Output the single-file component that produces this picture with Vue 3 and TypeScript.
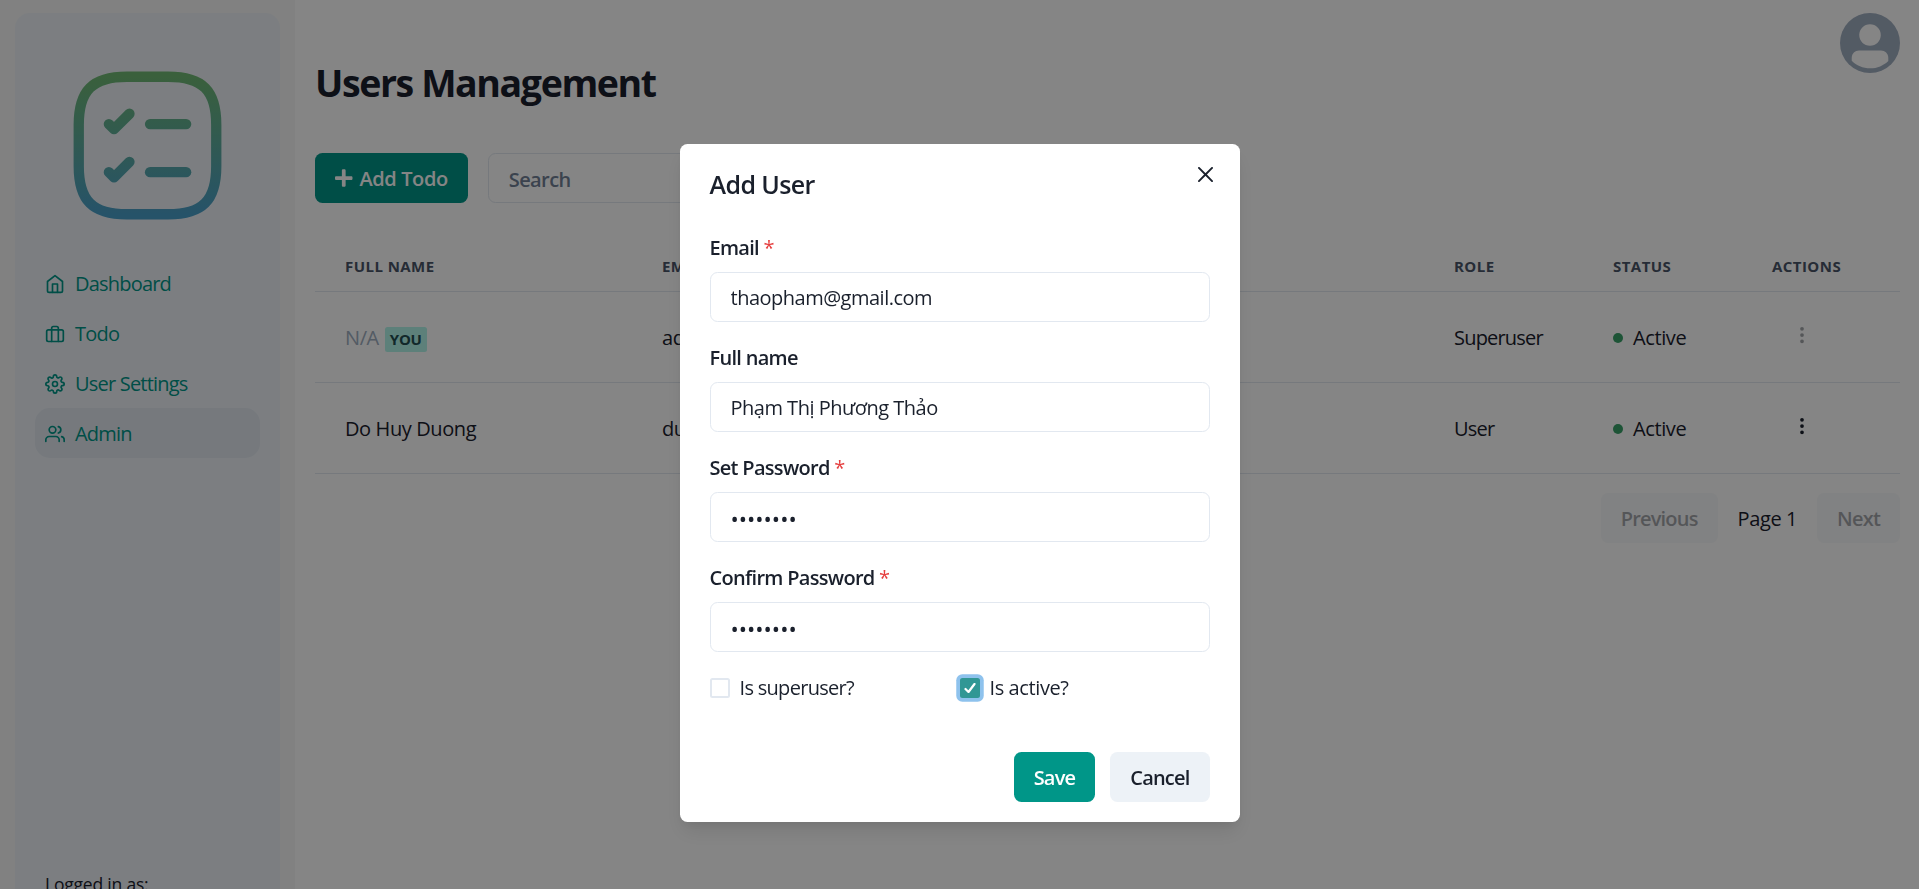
<script setup lang="ts">
type NavItem = { label: string; icon: string; active?: boolean };
type UserRow = { name: string; email: string; role: string; you?: boolean };
type Field = { label: string; type: string; value: string; required: boolean };

const navItems: NavItem[] = [
	{ label: 'Dashboard', icon: 'home' },
	{ label: 'Todo', icon: 'briefcase' },
	{ label: 'User Settings', icon: 'settings' },
	{ label: 'Admin', icon: 'users', active: true },
];

const users: UserRow[] = [
	{ name: 'N/A', email: 'admin@example.com', role: 'Superuser', you: true },
	{ name: 'Do Huy Duong', email: 'duongdo@gmail.com', role: 'User' },
];

const fields: Field[] = [
	{ label: 'Email', type: 'email', value: 'thaopham@gmail.com', required: true },
	{ label: 'Full name', type: 'text', value: 'Phạm Thị Phương Thảo', required: false },
	{ label: 'Set Password', type: 'password', value: '12345678', required: true },
	{ label: 'Confirm Password', type: 'password', value: '12345678', required: true },
];
</script>

<template>
	<div class="page">
		<aside class="sidebar">
			<div class="sidebarPanel">
				<svg class="logo" viewBox="0 0 24 24" fill="none" stroke="url(#logoGradient)" stroke-width="1.5" stroke-linecap="round" stroke-linejoin="round">
					<defs>
						<linearGradient id="logoGradient" gradientUnits="userSpaceOnUse" x1="12" y1="2" x2="12" y2="22">
							<stop offset="0" stop-color="#6fb874" />
							<stop offset="1" stop-color="#4a9fc9" />
						</linearGradient>
					</defs>
					<path d="M9 22h6c5 0 7-2 7-7V9c0-5-2-7-7-7H9C4 2 2 4 2 9v6c0 5 2 7 7 7Z" />
					<path d="M12.37 8.88h5.25" />
					<path d="M6.38 8.88l.75.75 2.25-2.25" />
					<path d="M12.37 15.88h5.25" />
					<path d="M6.38 15.88l.75.75 2.25-2.25" />
				</svg>
				<nav class="nav">
					<a v-for="item in navItems" :key="item.label" class="navItem" :class="{ active: item.active }">
						<svg class="navIcon" viewBox="0 0 24 24" fill="none" stroke="currentColor" stroke-width="2" stroke-linecap="round" stroke-linejoin="round">
							<template v-if="item.icon === 'home'">
								<path d="M3 9l9-7 9 7v11a2 2 0 0 1-2 2H5a2 2 0 0 1-2-2z" />
								<polyline points="9 22 9 12 15 12 15 22" />
							</template>
							<template v-else-if="item.icon === 'briefcase'">
								<rect x="2" y="7" width="20" height="14" rx="2" ry="2" />
								<path d="M16 21V5a2 2 0 0 0-2-2h-4a2 2 0 0 0-2 2v16" />
							</template>
							<template v-else-if="item.icon === 'settings'">
								<circle cx="12" cy="12" r="3" />
								<path d="M19.4 15a1.65 1.65 0 0 0 .33 1.82l.06.06a2 2 0 0 1 0 2.83 2 2 0 0 1-2.83 0l-.06-.06a1.65 1.65 0 0 0-1.82-.33 1.65 1.65 0 0 0-1 1.51V21a2 2 0 0 1-2 2 2 2 0 0 1-2-2v-.09A1.65 1.65 0 0 0 9 19.4a1.65 1.65 0 0 0-1.82.33l-.06.06a2 2 0 0 1-2.83 0 2 2 0 0 1 0-2.83l.06-.06a1.65 1.65 0 0 0 .33-1.82 1.65 1.65 0 0 0-1.51-1H3a2 2 0 0 1-2-2 2 2 0 0 1 2-2h.09A1.65 1.65 0 0 0 4.6 9a1.65 1.65 0 0 0-.33-1.82l-.06-.06a2 2 0 0 1 0-2.83 2 2 0 0 1 2.83 0l.06.06a1.65 1.65 0 0 0 1.82.33H9a1.65 1.65 0 0 0 1-1.51V3a2 2 0 0 1 2-2 2 2 0 0 1 2 2v.09a1.65 1.65 0 0 0 1 1.51 1.65 1.65 0 0 0 1.82-.33l.06-.06a2 2 0 0 1 2.83 0 2 2 0 0 1 0 2.83l-.06.06a1.65 1.65 0 0 0-.33 1.82V9a1.65 1.65 0 0 0 1.51 1H21a2 2 0 0 1 2 2 2 2 0 0 1-2 2h-.09a1.65 1.65 0 0 0-1.51 1z" />
							</template>
							<template v-else>
								<path d="M17 21v-2a4 4 0 0 0-4-4H5a4 4 0 0 0-4 4v2" />
								<circle cx="9" cy="7" r="4" />
								<path d="M23 21v-2a4 4 0 0 0-3-3.87" />
								<path d="M16 3.13a4 4 0 0 1 0 7.75" />
							</template>
						</svg>
						<span>{{ item.label }}</span>
					</a>
				</nav>
				<div class="loggedIn">Logged in as:</div>
			</div>
		</aside>

		<main class="main">
			<div class="avatar">
				<svg viewBox="0 0 128 128" fill="#fff">
					<path d="M103,102.1388 C93.094,111.92 79.3504,118 64.1638,118 C48.8056,118 34.9294,111.768 25,101.7892 L25,95.2 C25,86.8096 31.981,80 40.6,80 L87.4,80 C96.019,80 103,86.8096 103,95.2 L103,102.1388 Z" />
					<path d="M63.9961647,24 C51.2938136,24 41,34.2938136 41,46.9961647 C41,59.7061864 51.2938136,70 63.9961647,70 C76.6985159,70 87,59.7061864 87,46.9961647 C87,34.2938136 76.6985159,24 63.9961647,24" />
				</svg>
			</div>

			<h1 class="title">Users Management</h1>

			<div class="toolbar">
				<button class="addButton">
					<svg class="plusIcon" viewBox="0 0 448 512" fill="currentColor">
						<path d="M416 208H272V64c0-17.67-14.33-32-32-32h-32c-17.67 0-32 14.33-32 32v144H32c-17.67 0-32 14.33-32 32v32c0 17.67 14.33 32 32 32h144v144c0 17.67 14.33 32 32 32h32c17.67 0 32-14.33 32-32V304h144c17.67 0 32-14.33 32-32v-32c0-17.67-14.33-32-32-32z" />
					</svg>
					<span class="addLabel">Add Todo</span>
				</button>
				<input class="search" placeholder="Search" />
			</div>

			<table class="userTable">
				<colgroup>
					<col style="width: 317px" />
					<col />
					<col style="width: 159px" />
					<col style="width: 159px" />
					<col style="width: 158px" />
				</colgroup>
				<thead>
					<tr>
						<th>Full name</th>
						<th>Email</th>
						<th>Role</th>
						<th>Status</th>
						<th>Actions</th>
					</tr>
				</thead>
				<tbody>
					<tr v-for="user in users" :key="user.email">
						<td :class="{ muted: user.you }">
							{{ user.name }}<span v-if="user.you" class="youBadge">You</span>
						</td>
						<td>{{ user.email }}</td>
						<td class="roleCell">{{ user.role }}</td>
						<td>
							<span class="status"><i class="statusDot" />Active</span>
						</td>
						<td>
							<button class="actionButton" :class="{ disabled: user.you }">
								<svg viewBox="0 0 16 16" fill="currentColor">
									<path d="M9.5 13a1.5 1.5 0 1 1-3 0 1.5 1.5 0 0 1 3 0zm0-5a1.5 1.5 0 1 1-3 0 1.5 1.5 0 0 1 3 0zm0-5a1.5 1.5 0 1 1-3 0 1.5 1.5 0 0 1 3 0z" />
								</svg>
							</button>
						</td>
					</tr>
				</tbody>
			</table>

			<div class="pagination">
				<button class="pageButton" disabled>Previous</button>
				<span class="pageLabel">Page 1</span>
				<button class="pageButton" disabled>Next</button>
			</div>
		</main>

		<div class="overlay" />

		<div class="modalWrap">
			<form class="modal" @submit.prevent>
				<header class="modalHeader">Add User</header>
				<button class="closeButton" type="button">
					<svg viewBox="0 0 24 24" fill="currentColor">
						<path d="M.439,21.44a1.5,1.5,0,0,0,2.122,2.121L11.823,14.3a.25.25,0,0,1,.354,0l9.262,9.263a1.5,1.5,0,1,0,2.122-2.121L14.3,12.177a.25.25,0,0,1,0-.354l9.263-9.262A1.5,1.5,0,0,0,21.439.44L12.177,9.7a.25.25,0,0,1-.354,0L2.561.44A1.5,1.5,0,0,0,.439,2.561L9.7,11.823a.25.25,0,0,1,0,.354Z" />
					</svg>
				</button>
				<div class="modalBody">
					<div v-for="field in fields" :key="field.label" class="formField">
						<label class="fieldLabel">
							{{ field.label }}<span v-if="field.required" class="required"> *</span>
						</label>
						<input class="fieldInput" :type="field.type" :value="field.value" />
					</div>
					<div class="checkRow">
						<label class="check">
							<span class="checkBox" />
							<span class="checkText">Is superuser?</span>
						</label>
						<label class="check">
							<span class="checkBox checked">
								<svg viewBox="0 0 12 10" fill="none" stroke="#fff" stroke-width="2.2" stroke-linecap="round" stroke-linejoin="round">
									<polyline points="1.5 6 4.5 9 10.5 1" />
								</svg>
							</span>
							<span class="checkText wide">Is active?</span>
						</label>
					</div>
				</div>
				<footer class="modalFooter">
					<button class="saveButton" type="submit">Save</button>
					<button class="cancelButton" type="button">Cancel</button>
				</footer>
			</form>
		</div>
	</div>
</template>

<style>
html,
body {
	margin: 0;
	height: 100%;
	overflow: hidden;
	background: #fff;
}
</style>

<style scoped>
.page {
	display: flex;
	height: 889px;
	overflow: hidden;
	font-family: 'Open Sans', 'Noto Sans', sans-serif;
	font-size: 20px;
	line-height: 30px;
	letter-spacing: -0.03em;
	color: #1a202c;
	background: #fff;
}
.sidebar {
	flex: none;
	width: 295px;
	box-sizing: border-box;
	padding: 13px 15px 0;
	background: #f7f7f7;
}
.sidebarPanel {
	display: flex;
	flex-direction: column;
	align-items: center;
	box-sizing: border-box;
	height: 900px;
	padding: 50px 20px 0;
	border-radius: 15px;
	background: #edf2f7;
}
.logo {
	flex: none;
	width: 165px;
	height: 165px;
	margin-left: -1px;
}
.nav {
	align-self: stretch;
	margin-top: 30px;
}
.navItem {
	display: flex;
	align-items: center;
	gap: 10px;
	box-sizing: border-box;
	height: 50px;
	padding: 2px 10px 0;
	border-radius: 15px;
	color: #009688;
	letter-spacing: -0.8px;
}
.navItem.active {
	background: #e2e8f0;
}
.navIcon {
	flex: none;
	width: 20px;
	height: 20px;
}
.loggedIn {
	align-self: flex-start;
	margin-top: auto;
	margin-bottom: 14px;
	padding-left: 10px;
	font-size: 17.5px;
	letter-spacing: -0.2px;
}
.main {
	position: relative;
	flex: 1;
	min-width: 0;
	padding: 60px 19px 0 20px;
}
.avatar {
	position: absolute;
	top: 13px;
	right: 19px;
	width: 60px;
	height: 60px;
	border-radius: 50%;
	overflow: hidden;
	background: #a0aec0;
}
.avatar svg {
	display: block;
	width: 100%;
	height: 100%;
}
.title {
	margin: 0;
	font-size: 37.5px;
	line-height: 45px;
	font-weight: 700;
	letter-spacing: -1.4px;
}
.toolbar {
	display: flex;
	gap: 20px;
	margin-top: 48px;
}
.addButton {
	display: flex;
	align-items: center;
	gap: 7px;
	height: 50px;
	padding: 0 20px;
	border: 0;
	border-radius: 7.5px;
	background: #009688;
	color: #fff;
	font: inherit;
	font-weight: 600;
	letter-spacing: -0.4px;
}
.addLabel {
	padding-top: 2px;
}
.plusIcon {
	width: 17.5px;
	height: 20px;
}
.search {
	width: 500px;
	height: 50px;
	box-sizing: border-box;
	padding: 2px 20px 0;
	border: 1px solid #e2e8f0;
	border-radius: 7.5px;
	background: #fff;
	font: inherit;
	letter-spacing: inherit;
	outline: 0;
}
.search::placeholder {
	color: #718096;
	font-weight: 600;
	opacity: 1;
}
.userTable {
	width: 100%;
	margin-top: 38px;
	border-collapse: collapse;
	table-layout: fixed;
}
.userTable th {
	height: 50px;
	padding: 0 30px;
	box-sizing: border-box;
	border-bottom: 1px solid #e2e8f0;
	color: #4a5568;
	font-size: 15px;
	font-weight: 700;
	letter-spacing: 0.03em;
	text-align: left;
	text-transform: uppercase;
}
.userTable td {
	height: 91px;
	padding: 2px 30px 0;
	box-sizing: border-box;
	border-bottom: 1px solid #e2e8f0;
	white-space: nowrap;
	letter-spacing: -0.4px;
}
.userTable td.muted {
	color: #a0aec0;
}
.userTable td.roleCell {
	letter-spacing: -0.8px;
}
.youBadge {
	display: inline-block;
	margin-left: 6px;
	padding: 0 5px;
	border-radius: 2.5px;
	background: #b2f5ea;
	color: #234e52;
	font-size: 15px;
	line-height: 25px;
	font-weight: 700;
	letter-spacing: -0.02em;
	text-transform: uppercase;
	vertical-align: 0;
}
.status {
	display: flex;
	align-items: center;
	gap: 10px;
}
.statusDot {
	width: 10px;
	height: 10px;
	border-radius: 50%;
	background: #38a169;
}
.actionButton {
	display: block;
	width: 60px;
	height: 50px;
	margin-top: -6px;
	padding: 0;
	border: 0;
	background: none;
	color: #1a202c;
}
.actionButton.disabled {
	opacity: 0.4;
}
.actionButton svg {
	display: block;
	width: 20px;
	height: 20px;
	margin: auto;
}
.pagination {
	display: flex;
	align-items: center;
	justify-content: flex-end;
	gap: 20px;
	margin-top: 19px;
}
.pageLabel {
	padding-top: 2px;
	letter-spacing: -0.4px;
}
.pageButton {
	height: 50px;
	padding: 2px 20px 0;
	border: 0;
	border-radius: 7.5px;
	background: #edf2f7;
	color: #1a202c;
	font: inherit;
	font-weight: 600;
	letter-spacing: -0.8px;
	opacity: 0.4;
}
.overlay {
	position: fixed;
	inset: 0;
	background: rgba(0, 0, 0, 0.48);
}
.modalWrap {
	position: fixed;
	inset: 0;
	display: flex;
	justify-content: center;
	align-items: flex-start;
	padding-top: 144px;
}
.modal {
	position: relative;
	width: 560px;
	border-radius: 7.5px;
	background: #fff;
	box-shadow: 0 12px 20px -3px rgba(0, 0, 0, 0.1), 0 5px 8px -2px rgba(0, 0, 0, 0.05);
}
.modalHeader {
	box-sizing: border-box;
	height: 77.5px;
	padding: 22px 30px 0;
	font-size: 25px;
	line-height: 37.5px;
	font-weight: 600;
}
.closeButton {
	position: absolute;
	top: 10px;
	right: 14px;
	display: flex;
	align-items: center;
	justify-content: center;
	width: 40px;
	height: 40px;
	padding: 0;
	border: 0;
	background: none;
	color: #1a202c;
}
.closeButton svg {
	width: 15px;
	height: 15px;
}
.modalBody {
	padding: 10px 30px;
}
.formField + .formField {
	margin-top: 20px;
}
.fieldLabel {
	display: block;
	box-sizing: border-box;
	height: 30px;
	margin-bottom: 10px;
	padding-top: 1px;
	font-weight: 600;
	letter-spacing: -0.7px;
}
.required {
	color: #e53e3e;
	font-weight: 500;
}
.fieldInput {
	display: block;
	width: 100%;
	height: 50px;
	box-sizing: border-box;
	padding: 2px 20px 0;
	border: 1px solid #e2e8f0;
	border-radius: 7.5px;
	background: #fff;
	color: #1a202c;
	font: inherit;
	letter-spacing: -0.5px;
	outline: 0;
}
.fieldInput[type='password'] {
	font-size: 22px;
	letter-spacing: 0;
}
.checkRow {
	display: flex;
	margin-top: 21px;
}
.check {
	display: flex;
	align-items: center;
	gap: 10px;
	flex: 0 0 50%;
}
.checkText {
	letter-spacing: -0.7px;
}
.checkText.wide {
	letter-spacing: -0.4px;
}
.checkBox {
	display: flex;
	align-items: center;
	justify-content: center;
	width: 20px;
	height: 20px;
	box-sizing: border-box;
	border: 2.5px solid #e2e8f0;
	border-radius: 2.5px;
}
.checkBox.checked {
	border-color: #319795;
	background: #319795;
	box-shadow: 0 0 0 3.75px rgba(66, 153, 225, 0.6);
}
.checkBox svg {
	width: 12px;
	height: 10px;
}
.modalFooter {
	display: flex;
	justify-content: flex-end;
	gap: 15px;
	padding: 39px 30px 20px;
}
.saveButton,
.cancelButton {
	height: 50px;
	padding: 2px 20px 0;
	border: 0;
	border-radius: 7.5px;
	font: inherit;
	font-weight: 600;
	letter-spacing: -0.8px;
}
.saveButton {
	background: #009688;
	color: #fff;
}
.cancelButton {
	background: #edf2f7;
	color: #1a202c;
}
</style>
